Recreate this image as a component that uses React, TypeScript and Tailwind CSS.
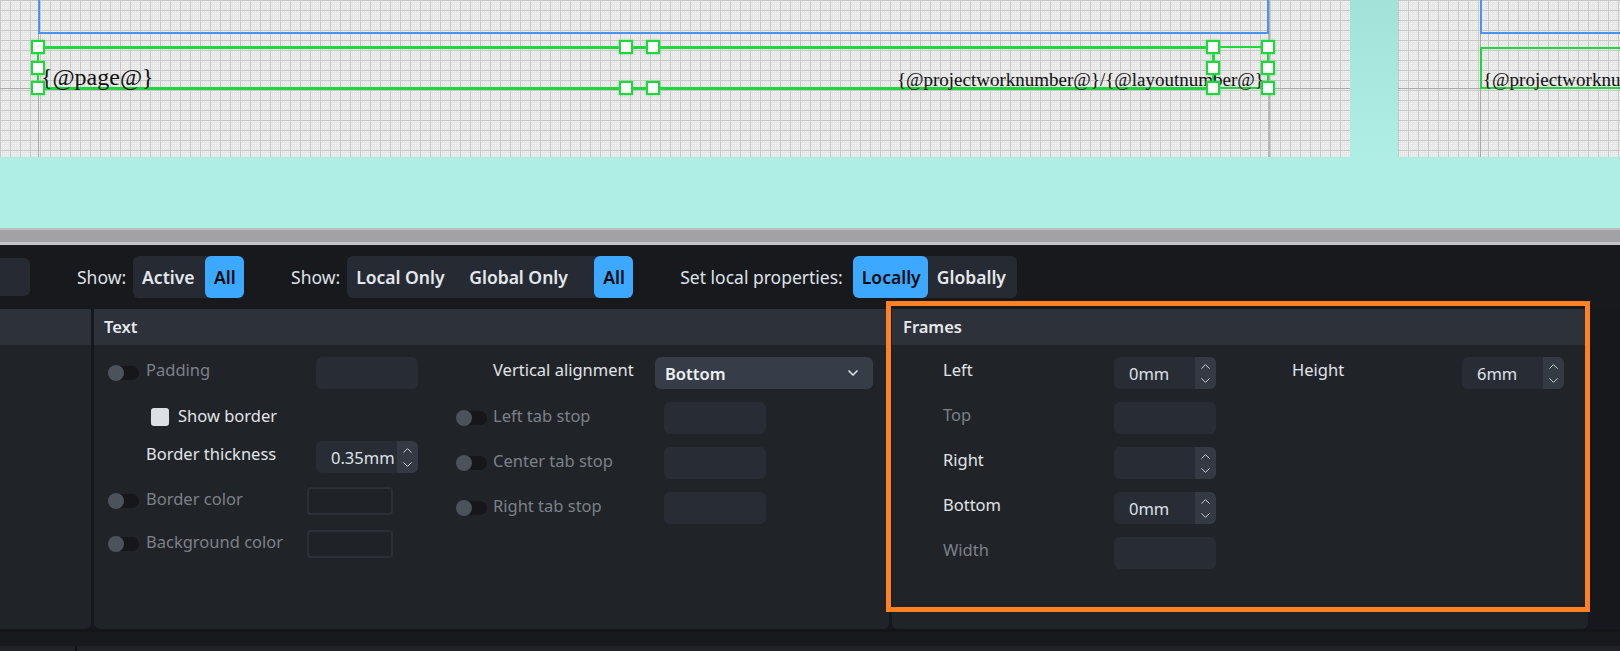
import { ChevronDown, ChevronUp } from 'lucide-react';

const grid =
  "bg-[#f4f4f4] bg-[linear-gradient(to_right,#c6c6c6_1px,transparent_1px),linear-gradient(to_bottom,#c6c6c6_1px,transparent_1px),linear-gradient(to_right,#e6e6e6_1px,transparent_1px),linear-gradient(to_bottom,#e6e6e6_1px,transparent_1px)] bg-[size:10px_10px,10px_10px,2px_2px,2px_2px]";

function Handle({ x, y }: { x: number; y: number }) {
  return (
    <div
      className="absolute w-[14px] h-[14px] bg-white border-2 border-[#1fd63d] shadow-[0_0_2px_#5be36f]"
      style={{ left: x - 7, top: y - 7 }}
    />
  );
}

function Toggle() {
  return (
    <div className="relative w-[30px] h-[14px] rounded-full bg-[#15171a] shrink-0">
      <div className="absolute -left-[1px] -top-[1px] w-4 h-4 rounded-full bg-[#4b525c]" />
    </div>
  );
}

function Field({ w = 102, h = 32 }: { w?: number; h?: number }) {
  return <div className="rounded-md bg-[#282d35]" style={{ width: w, height: h }} />;
}

function Spin({ value, w = 102 }: { value?: string; w?: number }) {
  return (
    <div className="flex h-8 rounded-md bg-[#282d35] overflow-hidden" style={{ width: w }}>
      <div className="flex-1 pl-[15px] pt-[5px] text-[16.5px] text-[#dfe2e7] whitespace-nowrap overflow-hidden">
        {value}
      </div>
      <div className="w-[21px] bg-[#343a44] flex flex-col items-center justify-center -space-y-[1px] text-[#c9ced6]">
        <ChevronUp size={15} strokeWidth={1.6} />
        <ChevronDown size={15} strokeWidth={1.6} />
      </div>
    </div>
  );
}

function ColorBox() {
  return <div className="w-[86px] h-[28px] rounded-[4px] border-2 border-[#2b3038] bg-[#1f2226]" />;
}

type Btn = { t: string; w: number; pl?: number };

function Seg({ items, active, label, gap }: { items: Btn[]; active: number; label: string; gap: number }) {
  return (
    <div className="flex items-center">
      <span className="text-[#dfe2e7]" style={{ marginRight: gap }}>{label}</span>
      <div className="flex h-[42px] rounded-md bg-[#262b33]">
        {items.map((b, i) => (
          <div
            key={b.t}
            style={{ width: b.w, paddingLeft: b.pl ?? 9 }}
            className={
              'flex items-center font-semibold rounded-md whitespace-nowrap ' +
              (i === active ? 'bg-[#3da8ff] text-[#0a0c0f]' : 'text-[#e4e7ec]')
            }
          >
            {b.t}
          </div>
        ))}
      </div>
    </div>
  );
}

export default function App() {
  const dim = 'text-[#7c8189]';
  const lit = 'text-[#e1e4e9]';
  return (
    <div className="w-[1620px] h-[651px] overflow-hidden bg-[#17181b] font-['Noto_Sans',sans-serif] text-[16.5px]">
      {/* canvas */}
      <div className="flex h-[157px]">
        <div className={'relative w-[1350px] h-full ' + grid}>
          <div className="absolute left-[38px] top-0 bottom-0 w-px bg-[#a9a9a9]" />
          <div className="absolute left-[1268px] top-0 bottom-0 w-[2px] bg-[#b6b6b6]" />
          <div className="absolute left-0 right-0 top-[88px] h-px bg-[#a9a9a9]" />
          <div className="absolute left-[38px] -top-[2px] w-[1231px] h-[36px] border-2 border-t-0 border-[#4a93f0]" />
          <div className="absolute left-[38px] top-[46px] w-[1175px] h-[44px] border-y-[3px] border-[#1fd63d]" />
          <div className="absolute left-[37px] top-[46px] w-[2px] h-[43px] bg-[#1fd63d]" />
          <div className="absolute left-[1212px] top-[46px] w-[2px] h-[43px] bg-[#1fd63d]" />
          <div className="absolute left-[1213px] top-[46px] w-[56px] h-[43px] border-2 border-[#1fd63d]" />
          <div className="absolute left-[41px] top-[65px] font-['Liberation_Serif',serif] text-[24px] leading-none text-[#111]">
            {'{@page@}'}
          </div>
          <div className="absolute right-[86px] top-[70px] font-['Liberation_Serif',serif] text-[19px] leading-none text-[#111] whitespace-nowrap">
            {'{@projectworknumber@}/{@layoutnumber@}'}
          </div>
          {[
            [38, 47], [38, 68], [38, 88],
            [626, 47], [653, 47], [626, 88], [653, 88],
            [1213, 47], [1213, 68], [1213, 88],
            [1268, 47], [1268, 68], [1268, 88],
          ].map(([x, y]) => (
            <Handle key={x + '-' + y} x={x} y={y} />
          ))}
        </div>
        <div className="w-[48px] h-full bg-[linear-gradient(to_bottom,#a2e3d9,#aeeee4)]" />
        <div className={'relative flex-1 h-full overflow-hidden ' + grid}>
          <div className="absolute left-[82px] top-0 bottom-0 w-px bg-[#a9a9a9]" />
          <div className="absolute left-0 right-0 top-[88px] h-px bg-[#a9a9a9]" />
          <div className="absolute left-[82px] -top-[2px] right-0 h-[36px] border-l-2 border-b-2 border-[#4a93f0]" />
          <div className="absolute left-[82px] top-[47px] right-0 h-[42px] border-2 border-r-0 border-[#1fd63d]" />
          <div className="absolute left-[85px] top-[70px] font-['Liberation_Serif',serif] text-[19px] leading-none text-[#111] whitespace-nowrap">
            {'{@projectworknu'}
          </div>
        </div>
      </div>
      <div className="h-[71px] bg-[#aeeee4]" />
      {/* splitter */}
      <div className="h-[17px] bg-[#a2a2a6] border-t-2 border-[#bdbdbf] border-b-[3px] border-b-[#c4c4c6]" />

      {/* toolbar */}
      <div className="h-[64px] bg-[#18191d] flex items-center gap-[47px] text-[17.5px]">
        <div className="w-[30px] h-[38px] rounded-r-md bg-[#262b33]" />
        <Seg label="Show:" gap={7} items={[{ t: 'Active', w: 72 }, { t: 'All', w: 39 }]} active={1} />
        <Seg
          label="Show:"
          gap={7}
          items={[{ t: 'Local Only', w: 108 }, { t: 'Global Only', w: 139, pl: 14 }, { t: 'All', w: 39 }]}
          active={2}
        />
        <Seg label="Set local properties:" gap={10} items={[{ t: 'Locally', w: 75 }, { t: 'Globally', w: 89 }]} active={0} />
      </div>

      {/* panels */}
      <div className="relative flex gap-[3px] h-[320px]">
        <div className="w-[91px] flex flex-col rounded-br-md overflow-hidden bg-[#202328]">
          <div className="h-[36px] bg-[#2c313a]" />
        </div>

        <div className="w-[795px] flex flex-col rounded-b-md overflow-hidden bg-[#202328]">
          <div className="h-[36px] bg-[#2c313a] flex items-center pl-[10px] font-semibold text-[#e6e9ee]">Text</div>
          <div className="flex pt-[12px]">
            {/* left column */}
            <div className="w-[340px] flex flex-col pl-[15px]">
              <div className="flex items-center h-8">
                <Toggle />
                <span className={'ml-[7px] w-[170px] -mt-[6px] ' + dim}>Padding</span>
                <Field />
              </div>
              <div className="flex items-center h-[52px] pl-[42px] pt-[4px]">
                <div className="w-[18px] h-[18px] rounded-[3px] bg-[#dcdfe4]" />
                <span className={'ml-[9px] -mt-[2px] ' + lit}>Show border</span>
              </div>
              <div className="flex items-center h-8">
                <span className={'ml-[37px] w-[170px] -mt-[6px] ' + lit}>Border thickness</span>
                <Spin value="0.35mm" />
              </div>
              <div className="flex items-center h-[28px] mt-[14px]">
                <Toggle />
                <span className={'ml-[7px] w-[161px] -mt-[4px] ' + dim}>Border color</span>
                <ColorBox />
              </div>
              <div className="flex items-center h-[28px] mt-[15px]">
                <Toggle />
                <span className={'ml-[7px] w-[161px] -mt-[4px] ' + dim}>Background color</span>
                <ColorBox />
              </div>
            </div>
            {/* right column */}
            <div className="flex flex-col pl-[23px]">
              <div className="flex items-center h-8">
                <span className={'ml-[36px] w-[162px] -mt-[6px] ' + lit}>Vertical alignment</span>
                <div className="w-[218px] h-8 rounded-md bg-[#363d48] flex items-center justify-between pl-[10px] pr-[12px]">
                  <span className="font-semibold text-[#eef0f3] mt-[2px]">Bottom</span>
                  <ChevronDown size={16} strokeWidth={2.5} className="text-[#dfe2e7]" />
                </div>
              </div>
              {['Left tab stop', 'Center tab stop', 'Right tab stop'].map((t) => (
                <div key={t} className="flex items-center h-8 mt-[13px]">
                  <Toggle />
                  <span className={'ml-[6px] w-[171px] -mt-[4px] ' + dim}>{t}</span>
                  <Field />
                </div>
              ))}
            </div>
          </div>
        </div>

        <div className="w-[696px] flex flex-col rounded-b-md overflow-hidden bg-[#202328]">
          <div className="h-[36px] bg-[#2c313a] flex items-center pl-[11px] font-semibold text-[#e6e9ee]">Frames</div>
          <div className="flex pt-[12px]">
            <div className="flex flex-col gap-[13px] pl-[51px]">
              {[
                { t: 'Left', on: true, v: '0mm', spin: true },
                { t: 'Top', on: false },
                { t: 'Right', on: true, v: '', spin: true },
                { t: 'Bottom', on: true, v: '0mm', spin: true },
                { t: 'Width', on: false },
              ].map((r) => (
                <div key={r.t} className="flex items-center h-8">
                  <span className={'w-[171px] -mt-[6px] ' + (r.on ? lit : dim)}>{r.t}</span>
                  {r.spin ? <Spin value={r.v} /> : <Field />}
                </div>
              ))}
            </div>
            <div className="flex items-start pl-[76px]">
              <div className="flex items-center h-8">
                <span className={'w-[170px] -mt-[6px] ' + lit}>Height</span>
                <Spin value="6mm" />
              </div>
            </div>
          </div>
        </div>

        {/* highlight */}
        <div className="absolute left-[886px] -top-[8px] w-[704px] h-[311px] border-[5px] border-[#ff8124] pointer-events-none" />
      </div>

      {/* bottom */}
      <div className="h-[17px] bg-[#17191c] border-t-[3px] border-[#141517]" />
      <div className="h-[5px] bg-[#1f2226] relative">
        <div className="absolute left-[75px] top-0 bottom-0 w-[2px] bg-[#101113]" />
      </div>
    </div>
  );
}
